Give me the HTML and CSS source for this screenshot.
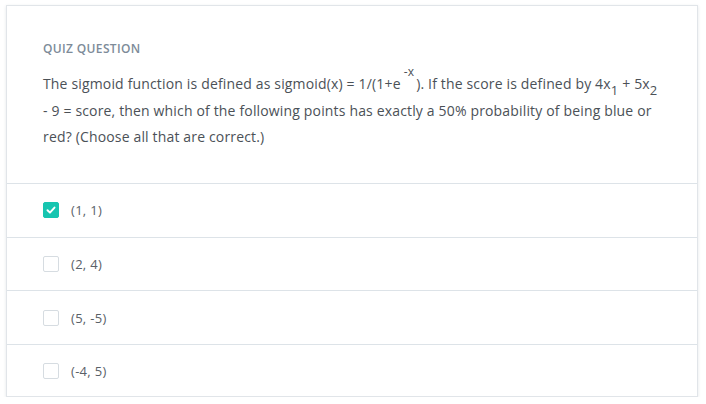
FILE: index.html
```
<!DOCTYPE html>
<html>
<head>
<meta charset="utf-8">
<link rel="stylesheet" href="styles.css">
</head>
<body>
<div class="card">
  <div class="question">
    <div class="label">QUIZ QUESTION</div>
    <p class="text">The sigmoid function is defined as sigmoid(x) = 1/(1+e<sup>-x</sup>). If the score is defined by 4x<sub>1</sub> + 5x<sub>2</sub> - 9 = score, then which of the following points has exactly a 50% probability of being blue or red? (Choose all that are correct.)</p>
  </div>
  <ul class="options">
    <li class="option"><span class="box checked"><svg viewBox="0 0 16 16" width="16" height="16"><path d="M4 8.3 L6.8 11 L12 5.2" fill="none" stroke="#fff" stroke-width="2.2" stroke-linecap="round" stroke-linejoin="round"/></svg></span><span class="opt-text">(1, 1)</span></li>
    <li class="option"><span class="box"></span><span class="opt-text">(2, 4)</span></li>
    <li class="option"><span class="box"></span><span class="opt-text">(5, -5)</span></li>
    <li class="option"><span class="box"></span><span class="opt-text">(-4, 5)</span></li>
  </ul>
</div>
</body>
</html>
```
FILE: styles.css
```
html, body {
  margin: 0;
  padding: 0;
  background: #ffffff;
}
body {
  padding: 5px 8px 0 6px;
  font-family: "Open Sans", "Liberation Sans", sans-serif;
  color: #4b5157;
}
.card {
  border: 1px solid #e1e5e9;
  box-shadow: 0 1px 3px rgba(40, 60, 80, 0.12);
  height: 390px;
  background: #fff;
}
.question {
  padding: 35px 36px 0 36px;
  height: 142px;
  border-bottom: 1px solid #dde3e8;
}
.label {
  font-size: 12px;
  font-weight: 600;
  line-height: 16px;
  color: #7d8b99;
  letter-spacing: 0.35px;
}
.text {
  margin: 14px 0 0 0;
  font-size: 14px;
  line-height: 26.5px;
  letter-spacing: 0.16px;
}
.text sup {
  font-size: 12px;
  line-height: 0;
  vertical-align: 13px;
  margin: 0 2px 0 3px;
}
.text sub {
  font-size: 13px;
  line-height: 0;
  vertical-align: -6px;
}
.options {
  list-style: none;
  margin: 0;
  padding: 0;
}
.option {
  display: flex;
  align-items: center;
  gap: 12px;
  height: 52.67px;
  padding: 0 36px;
  border-bottom: 1px solid #dde3e8;
  font-size: 13px;
}
.option:last-child {
  border-bottom: none;
}
.box {
  width: 14px;
  height: 14px;
  border: 1px solid #d6dce1;
  border-radius: 2px;
  display: flex;
  align-items: center;
  justify-content: center;
  flex: none;
}
.box.checked {
  background: #17c5b0;
  border-color: #17c5b0;
}
.opt-text {
  color: #5a6168;
  letter-spacing: 0.3px;
}
```
